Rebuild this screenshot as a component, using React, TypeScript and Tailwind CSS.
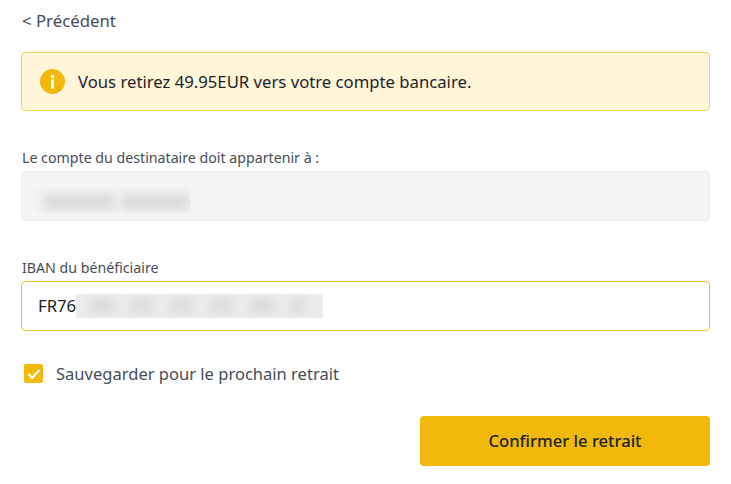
export default function App() {
  return (
    <div className="w-[731px] h-[484px] bg-white overflow-hidden pl-[21px] pr-[21px] font-['Noto_Sans',sans-serif]">
      <div className="h-[52px] pt-[10px] pl-[1px] text-[16.8px] leading-[22px] text-[#474d57]">&lt; Précédent</div>

      <div className="h-[59px] flex items-center pl-[18px] bg-[#fff5d8] border border-[#f3d361] rounded-[4px]">
        <svg width="25" height="25" viewBox="0 0 25 25" className="shrink-0">
          <circle cx="12.5" cy="12.5" r="12.5" fill="#f0b90b" />
          <rect x="11" y="10.5" width="3" height="9" fill="#fff" />
          <rect x="11" y="6" width="3" height="3" fill="#fff" />
        </svg>
        <span className="ml-[13px] text-[16.7px] leading-[22px] text-[#1e2329]">Vous retirez 49.95EUR vers votre compte bancaire.</span>
      </div>

      <div className="mt-[38px] h-[22px] pl-[1px] text-[14.2px] leading-[18px] text-[#474d57]">Le compte du destinataire doit appartenir à :</div>
      <div className="h-[50px] bg-[#f5f5f5] border border-[#eaecef] rounded-[4px] flex items-center overflow-hidden pl-[12px]">
        <div className="w-[157px] h-[26px] mt-[10px] overflow-hidden flex items-center gap-[8px] pl-[10px] bg-[#f2f2f2]">
          <div className="w-[70px] h-[15px] bg-[#dadada] blur-[4px]" />
          <div className="w-[66px] h-[15px] bg-[#dadada] blur-[4px]" />
        </div>
      </div>

      <div className="mt-[38px] h-[22px] pl-[1px] text-[14.2px] leading-[18px] text-[#474d57]">IBAN du bénéficiaire</div>
      <div className="h-[50px] bg-white border border-[#ebc430] rounded-[4px] flex items-center pl-[16px]">
        <span className="text-[16.7px] leading-[22px] text-[#1e2329]">FR76</span>
        <div className="w-[247px] h-[24px] bg-[#ececec] overflow-hidden flex items-center gap-[16px] pl-[14px]">
          <div className="w-[24px] h-[14px] bg-[#dadada] blur-[5px]" />
          <div className="w-[24px] h-[14px] bg-[#dddddd] blur-[5px]" />
          <div className="w-[24px] h-[14px] bg-[#dddddd] blur-[5px]" />
          <div className="w-[24px] h-[14px] bg-[#dddddd] blur-[5px]" />
          <div className="w-[24px] h-[14px] bg-[#dadada] blur-[5px]" />
          <div className="w-[16px] h-[14px] bg-[#dddddd] blur-[5px]" />
        </div>
      </div>

      <div className="mt-[33px] flex items-center pl-[3px] h-[19px]">
        <div className="w-[19px] h-[19px] rounded-[2px] bg-[#f0b90b] flex items-center justify-center shrink-0">
          <svg width="14" height="12" viewBox="0 0 14 12" fill="none">
            <path d="M1.5 6L5.2 9.8L12.5 2" stroke="#fff" strokeWidth="2.2" />
          </svg>
        </div>
        <span className="ml-[13px] text-[16.55px] leading-[22px] text-[#474d57]">Sauvegarder pour le prochain retrait</span>
      </div>

      <div className="mt-[33px] flex justify-end">
        <button className="w-[290px] h-[50px] rounded-[4px] bg-[#f0b90b] text-[16.6px] font-medium text-[#1e2329]">Confirmer le retrait</button>
      </div>
    </div>
  )
}
